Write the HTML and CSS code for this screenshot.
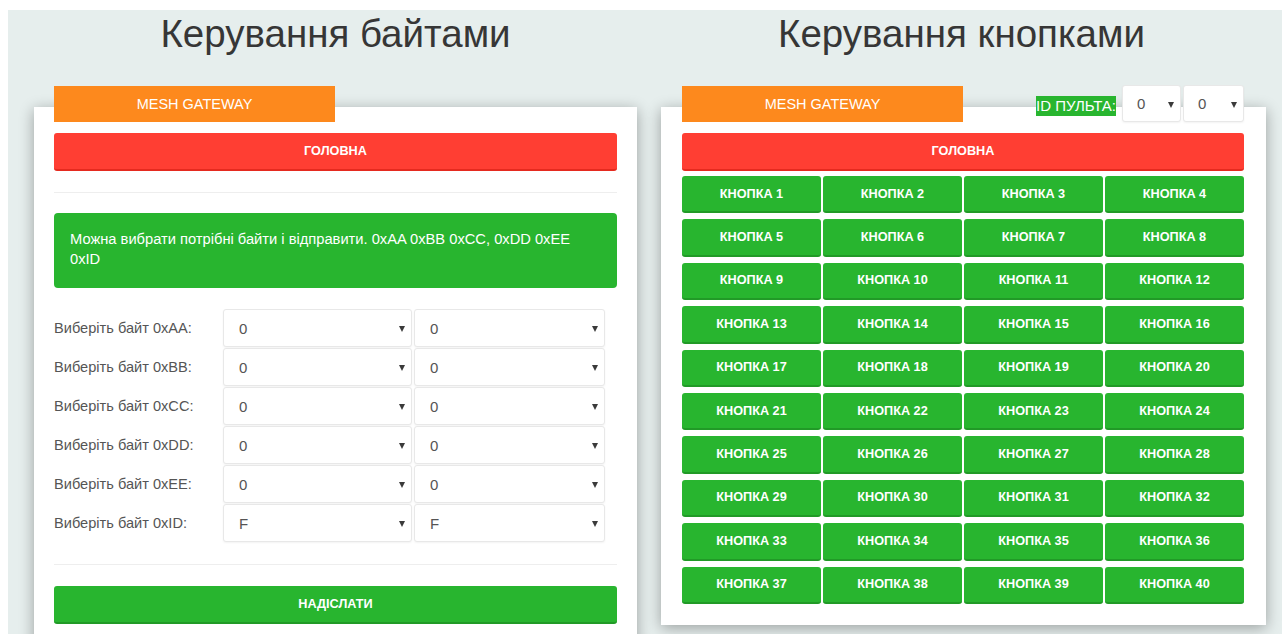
FILE: index.html
```html
<!DOCTYPE html>
<html lang="uk">
<head>
<meta charset="utf-8">
<title>Mesh Gateway</title>
<link rel="stylesheet" href="styles.css">
</head>
<body>
<main class="page">
  <section class="col">
    <h1 class="title">Керування байтами</h1>
    <div class="card card-bytes">
      <div class="card-head">
        <div class="tab">MESH GATEWAY</div>
      </div>
      <a class="btn btn-red" href="#">ГОЛОВНА</a>
      <hr class="sep">
      <div class="note">Можна вибрати потрібні байти і відправити. 0xAA 0xBB 0xCC, 0xDD 0xEE 0xID</div>
      <form class="byte-form">
        <label class="byte-label">Виберіть байт 0xAA:</label>
        <span class="pick"><select><option>0</option></select></span>
        <span class="pick"><select><option>0</option></select></span>
        <label class="byte-label">Виберіть байт 0xBB:</label>
        <span class="pick"><select><option>0</option></select></span>
        <span class="pick"><select><option>0</option></select></span>
        <label class="byte-label">Виберіть байт 0xCC:</label>
        <span class="pick"><select><option>0</option></select></span>
        <span class="pick"><select><option>0</option></select></span>
        <label class="byte-label">Виберіть байт 0xDD:</label>
        <span class="pick"><select><option>0</option></select></span>
        <span class="pick"><select><option>0</option></select></span>
        <label class="byte-label">Виберіть байт 0xEE:</label>
        <span class="pick"><select><option>0</option></select></span>
        <span class="pick"><select><option>0</option></select></span>
        <label class="byte-label">Виберіть байт 0xID:</label>
        <span class="pick"><select><option>F</option></select></span>
        <span class="pick"><select><option>F</option></select></span>
      </form>
      <hr class="sep sep-bottom">
      <a class="btn btn-green" href="#">НАДІСЛАТИ</a>
    </div>
  </section>

  <section class="col">
    <h1 class="title title-keys">Керування кнопками</h1>
    <div class="card card-keys">
      <div class="card-head">
        <div class="tab">MESH GATEWAY</div>
        <div class="remote-id">
          <span class="remote-label">ID ПУЛЬТА:</span>
          <span class="pick pick-sm"><select><option>0</option></select></span>
          <span class="pick pick-sm pick-sm2"><select><option>0</option></select></span>
        </div>
      </div>
      <a class="btn btn-red" href="#">ГОЛОВНА</a>
      <div class="keys">
        <a class="btn btn-green" href="#">КНОПКА 1</a>
        <a class="btn btn-green" href="#">КНОПКА 2</a>
        <a class="btn btn-green" href="#">КНОПКА 3</a>
        <a class="btn btn-green" href="#">КНОПКА 4</a>
        <a class="btn btn-green" href="#">КНОПКА 5</a>
        <a class="btn btn-green" href="#">КНОПКА 6</a>
        <a class="btn btn-green" href="#">КНОПКА 7</a>
        <a class="btn btn-green" href="#">КНОПКА 8</a>
        <a class="btn btn-green" href="#">КНОПКА 9</a>
        <a class="btn btn-green" href="#">КНОПКА 10</a>
        <a class="btn btn-green" href="#">КНОПКА 11</a>
        <a class="btn btn-green" href="#">КНОПКА 12</a>
        <a class="btn btn-green" href="#">КНОПКА 13</a>
        <a class="btn btn-green" href="#">КНОПКА 14</a>
        <a class="btn btn-green" href="#">КНОПКА 15</a>
        <a class="btn btn-green" href="#">КНОПКА 16</a>
        <a class="btn btn-green" href="#">КНОПКА 17</a>
        <a class="btn btn-green" href="#">КНОПКА 18</a>
        <a class="btn btn-green" href="#">КНОПКА 19</a>
        <a class="btn btn-green" href="#">КНОПКА 20</a>
        <a class="btn btn-green" href="#">КНОПКА 21</a>
        <a class="btn btn-green" href="#">КНОПКА 22</a>
        <a class="btn btn-green" href="#">КНОПКА 23</a>
        <a class="btn btn-green" href="#">КНОПКА 24</a>
        <a class="btn btn-green" href="#">КНОПКА 25</a>
        <a class="btn btn-green" href="#">КНОПКА 26</a>
        <a class="btn btn-green" href="#">КНОПКА 27</a>
        <a class="btn btn-green" href="#">КНОПКА 28</a>
        <a class="btn btn-green" href="#">КНОПКА 29</a>
        <a class="btn btn-green" href="#">КНОПКА 30</a>
        <a class="btn btn-green" href="#">КНОПКА 31</a>
        <a class="btn btn-green" href="#">КНОПКА 32</a>
        <a class="btn btn-green" href="#">КНОПКА 33</a>
        <a class="btn btn-green" href="#">КНОПКА 34</a>
        <a class="btn btn-green" href="#">КНОПКА 35</a>
        <a class="btn btn-green" href="#">КНОПКА 36</a>
        <a class="btn btn-green" href="#">КНОПКА 37</a>
        <a class="btn btn-green" href="#">КНОПКА 38</a>
        <a class="btn btn-green" href="#">КНОПКА 39</a>
        <a class="btn btn-green" href="#">КНОПКА 40</a>
      </div>
    </div>
  </section>
</main>
</body>
</html>
```

FILE: styles.css
```css
html, body {
  margin: 0;
  padding: 0;
  background: #ffffff;
  overflow: hidden;
}

body {
  font-family: "Liberation Sans", Arial, sans-serif;
  color: #555;
}

.page {
  margin: 10px 0 0 8px;
  padding: 0 0 40px 26px;
  min-height: 700px;
  background: #e6eeed;
  display: grid;
  grid-template-columns: 603px 605px;
  column-gap: 24px;
  align-items: start;
}

.col {
  display: flex;
  flex-direction: column;
}

.title {
  margin: 2px 0 0;
  font-size: 38.5px;
  line-height: 44px;
  font-weight: normal;
  color: #363636;
  text-align: center;
}

.title-keys {
  padding-right: 4px;
}

.card {
  margin-top: 51px;
  background: #fff;
  box-shadow: 0 3px 14px rgba(0, 0, 0, 0.33);
}

.card-bytes {
  padding: 0 20px 30px;
}

.card-keys {
  padding: 0 22px 21px 21px;
}

.card-head {
  display: flex;
  justify-content: space-between;
  align-items: flex-start;
  margin-top: -21px;
  height: 36px;
  margin-bottom: 11px;
}

.tab {
  width: 281px;
  height: 36px;
  line-height: 36px;
  background: #fd891d;
  color: #fff;
  font-size: 14.5px;
  text-align: center;
}

.btn {
  display: flex;
  align-items: center;
  justify-content: center;
  box-sizing: border-box;
  height: 38px;
  border-radius: 3px;
  color: #fff;
  font-size: 12.7px;
  font-weight: bold;
  text-decoration: none;
}

.btn-red {
  background: #ff3e33;
  border-bottom: 2px solid #e52a1f;
}

.btn-green {
  background: #28b52f;
  border-bottom: 2px solid #219a27;
}

.sep {
  border: 0;
  border-top: 1px solid #eeeeee;
  margin: 21px 0 20px;
}

.sep-bottom {
  margin: 22px 0 21px;
}

.note {
  background: #28b52f;
  border-radius: 4px;
  color: #fff;
  font-size: 14.7px;
  line-height: 20px;
  padding: 16px 16px 19px;
}

.byte-form {
  margin-top: 21px;
  display: grid;
  grid-template-columns: 167px 189px 191px;
  grid-auto-rows: 38px;
  column-gap: 2px;
  row-gap: 1px;
  align-items: center;
}

.byte-label {
  font-size: 14.6px;
  color: #555;
}

.pick {
  position: relative;
  display: block;
  height: 100%;
}

.pick select {
  appearance: none;
  -webkit-appearance: none;
  box-sizing: border-box;
  width: 100%;
  height: 100%;
  margin: 0;
  padding: 0 0 0 15px;
  border: 1px solid #e8e8e8;
  border-radius: 3px;
  background: #fff;
  box-shadow: 0 1px 2px rgba(0, 0, 0, 0.05);
  font-family: "Liberation Sans", Arial, sans-serif;
  font-size: 15px;
  color: #555;
  outline: none;
}

/* small dropdown caret */
.pick::after {
  content: "";
  position: absolute;
  right: 7px;
  top: 50%;
  margin-top: -2px;
  border-left: 3px solid transparent;
  border-right: 3px solid transparent;
  border-top: 6px solid #3a3a3a;
  pointer-events: none;
}

.remote-id {
  display: flex;
  align-items: center;
  margin-top: -1px;
}

.remote-label {
  display: inline-block;
  background: #28b52f;
  color: #fff;
  font-size: 15px;
  line-height: 20px;
  margin-right: 6px;
  margin-top: 4px;
}

.pick-sm {
  width: 59px;
  height: 37px;
}

.pick-sm2 {
  width: 61px;
  margin-left: 2px;
}

.pick-sm select {
  padding-left: 14px;
}

.keys {
  margin-top: 5px;
  display: grid;
  grid-template-columns: repeat(4, 1fr);
  grid-auto-rows: 37.4px;
  column-gap: 2px;
  row-gap: 6px;
}

.keys .btn {
  height: auto;
}
```
